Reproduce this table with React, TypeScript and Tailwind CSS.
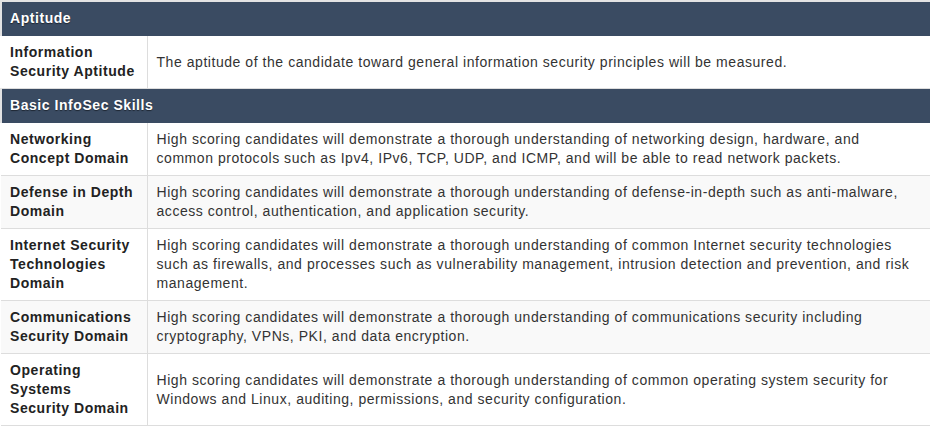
import React from 'react';

interface Row {
  label: string[];
  text: string[];
}

interface Section {
  title: string;
  rows: Row[];
}

const sections: Section[] = [
  {
    title: 'Aptitude',
    rows: [
      {
        label: ['Information', 'Security Aptitude'],
        text: ['The aptitude of the candidate toward general information security principles will be measured.'],
      },
    ],
  },
  {
    title: 'Basic InfoSec Skills',
    rows: [
      {
        label: ['Networking', 'Concept Domain'],
        text: [
          'High scoring candidates will demonstrate a thorough understanding of networking design, hardware, and',
          'common protocols such as Ipv4, IPv6, TCP, UDP, and ICMP, and will be able to read network packets.',
        ],
      },
      {
        label: ['Defense in Depth', 'Domain'],
        text: [
          'High scoring candidates will demonstrate a thorough understanding of defense-in-depth such as anti-malware,',
          'access control, authentication, and application security.',
        ],
      },
      {
        label: ['Internet Security', 'Technologies', 'Domain'],
        text: [
          'High scoring candidates will demonstrate a thorough understanding of common Internet security technologies',
          'such as firewalls, and processes such as vulnerability management, intrusion detection and prevention, and risk',
          'management.',
        ],
      },
      {
        label: ['Communications', 'Security Domain'],
        text: [
          'High scoring candidates will demonstrate a thorough understanding of communications security including',
          'cryptography, VPNs, PKI, and data encryption.',
        ],
      },
      {
        label: ['Operating', 'Systems', 'Security Domain'],
        text: [
          'High scoring candidates will demonstrate a thorough understanding of common operating system security for',
          'Windows and Linux, auditing, permissions, and security configuration.',
        ],
      },
    ],
  },
];

const App: React.FC = () => {
  return (
    <div className="w-[936px] h-[436px] bg-white overflow-hidden font-['Liberation_Sans',Arial,sans-serif] text-[14px] leading-[19px] tracking-[0.55px]">
      <table className="w-[930px] border-collapse border-t-2 border-[#e3e3e3] table-fixed">
        <colgroup>
          <col className="w-[146px]" />
          <col />
        </colgroup>
        <tbody>
          {sections.map((section) => (
            <React.Fragment key={section.title}>
              <tr>
                <th
                  colSpan={2}
                  className="bg-[#3a4b62] text-white font-bold text-left pl-[8px] pt-[7px] pb-[8px] border-l-2 border-[#e3e3e3] [text-shadow:0_1px_1px_rgba(0,0,0,0.5)]"
                >
                  {section.title}
                </th>
              </tr>
              {section.rows.map((row, idx) => (
                <tr key={row.label.join(' ')} className={idx % 2 === 1 ? 'bg-[#f9f9f9]' : 'bg-white'}>
                  <td className="align-middle pl-[9px] pr-[4px] py-[7px] border-b border-r border-[#dddddd] font-bold text-[#222222]">
                    {row.label.map((l) => (
                      <div key={l} className="whitespace-nowrap">{l}</div>
                    ))}
                  </td>
                  <td className="align-middle pl-[9px] pr-[8px] py-[7px] border-b border-[#dddddd] text-[#333333]">
                    {row.text.map((t) => (
                      <div key={t} className="whitespace-nowrap">{t}</div>
                    ))}
                  </td>
                </tr>
              ))}
            </React.Fragment>
          ))}
        </tbody>
      </table>
    </div>
  );
};

export default App;
